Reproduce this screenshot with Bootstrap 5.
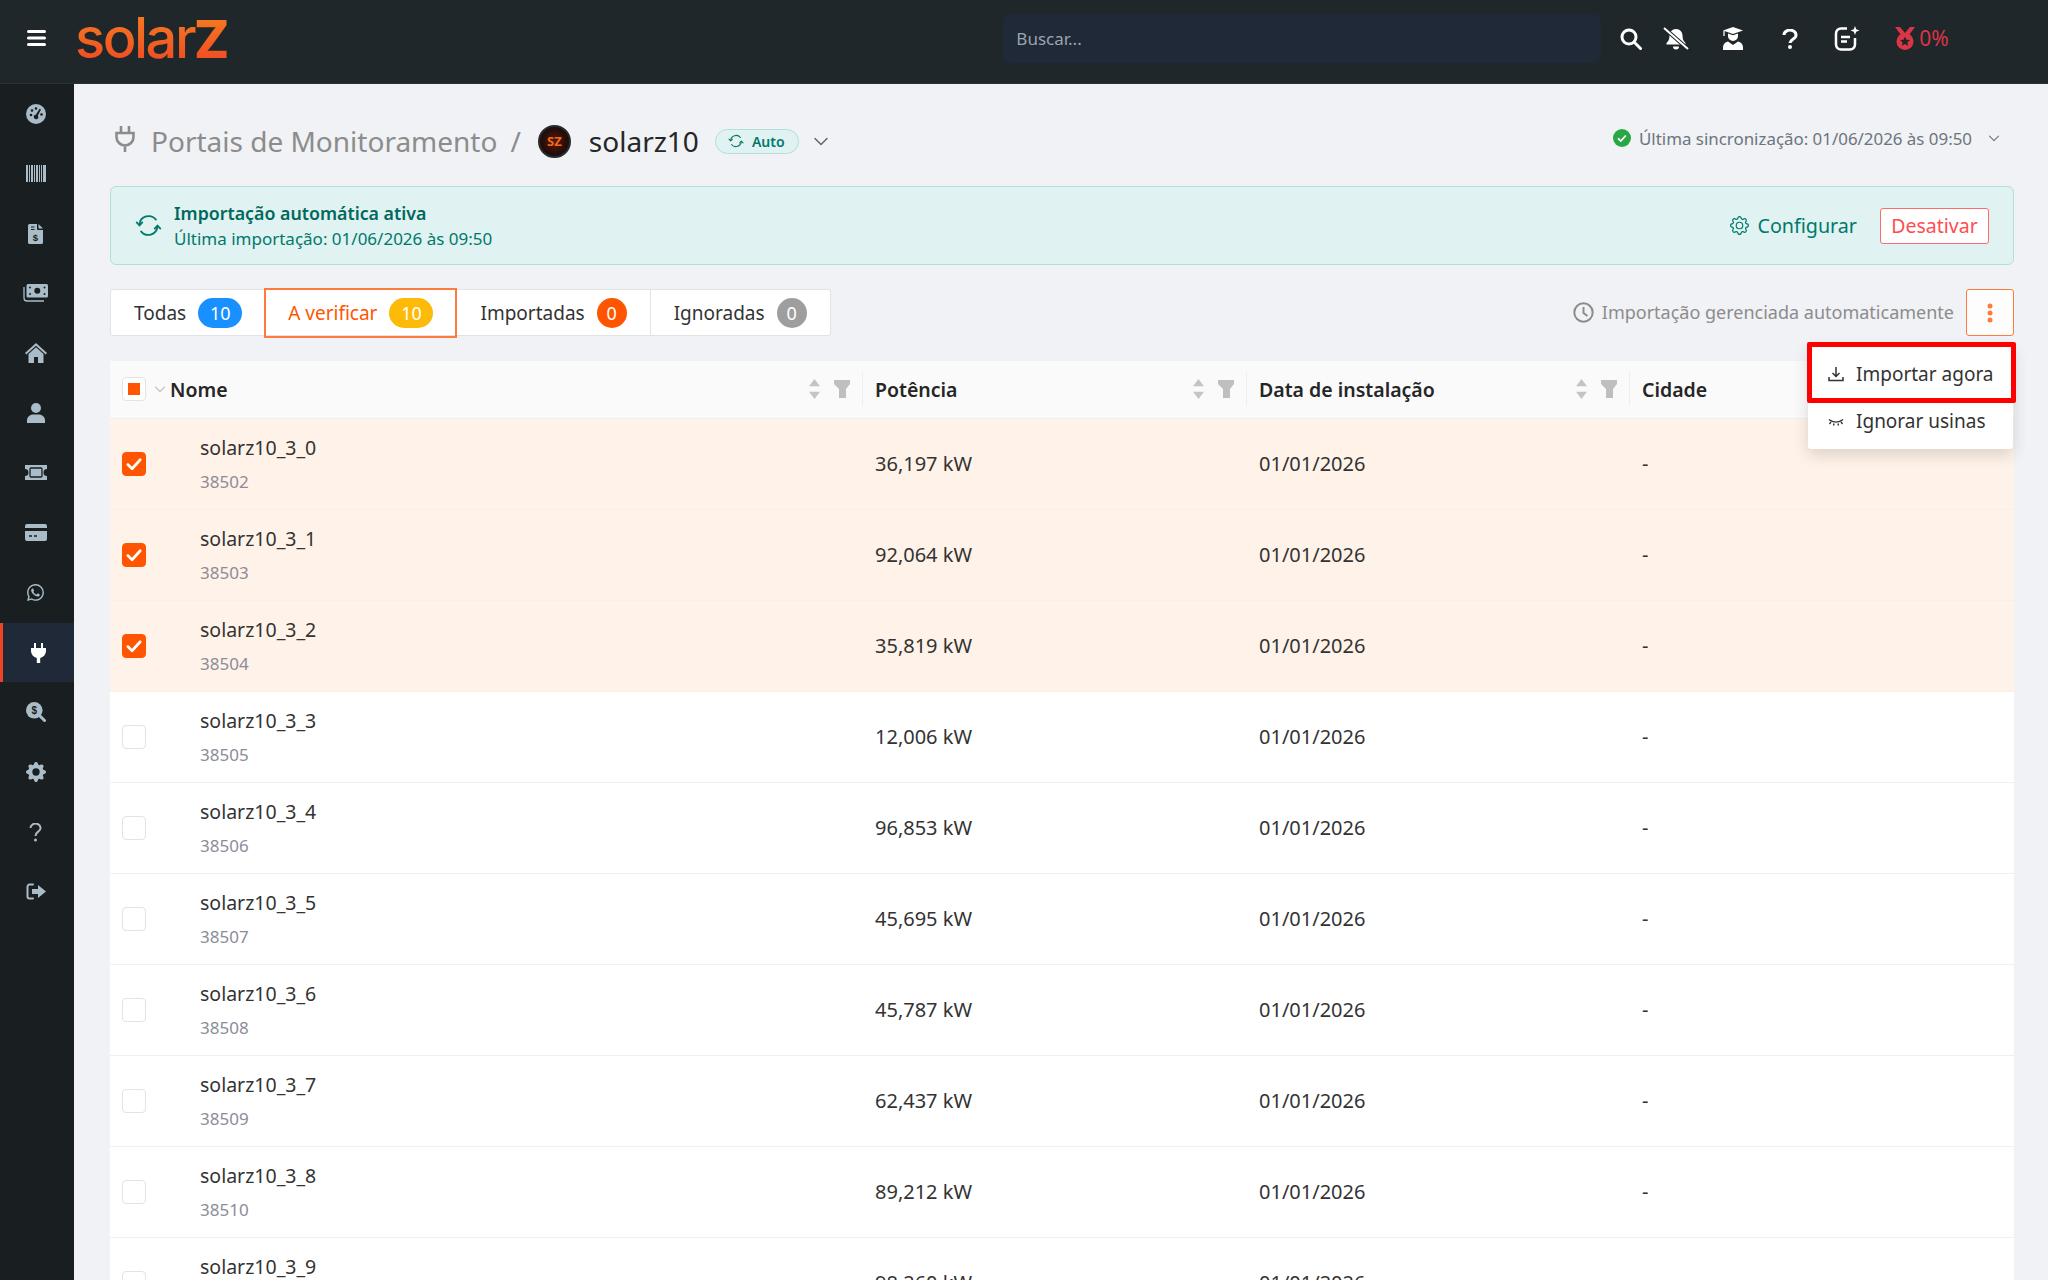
<!DOCTYPE html>
<html lang="pt-BR">
<head>
<meta charset="utf-8">
<meta name="viewport" content="width=device-width, initial-scale=1">
<title>Portais de Monitoramento - solarZ</title>
<link href="https://cdn.jsdelivr.net/npm/bootstrap@5.3.2/dist/css/bootstrap.min.css" rel="stylesheet">
<style>
  html, body { height: 100%; overflow: hidden; }
  body { font-family: "Noto Sans", sans-serif; font-size: 20px; color: #262626; background: #f0f2f5; }
  svg { display: block; flex: none; }

  .top-bar { flex: none; height: 84px; background: #1f272b; border-bottom: 1px solid #2a3438; padding: 0; flex-wrap: nowrap; justify-content: flex-start; }
  .burger { width: 72px; display: flex; justify-content: center; margin-top: -8px; }
  .logo-txt { margin-left: 3px; font-family: Inter, sans-serif; font-size: 56px; font-weight: 500; line-height: 60px; letter-spacing: -2.5px;
    background: linear-gradient(180deg, #f58220, #ef4423); -webkit-background-clip: text; background-clip: text; color: transparent; margin-top: -6px; }
  .logo-z { font-weight: 800; font-size: 52px; letter-spacing: 0; }
  .search-box { margin-left: 774px; width: 598px; height: 49px; background: #1f2937; border: 0; border-radius: 8px; color: #fff; font-size: 17px; padding: 0 13px; margin-top: -6px; }
  .search-box::placeholder { color: #9ca3af; opacity: 1; }
  .tb-ico { width: 24px; display: flex; justify-content: center; margin-left: 33px; margin-top: -6px; }
  .medal-pct { color: #dc3545; font-size: 21px; margin-left: 3px; margin-top: 0; }

  .side-bar { width: 74px; background: #191e20; flex: none; }
  .side-item { height: 59.85px; display: flex; align-items: center; justify-content: center; color: #a9bcc8; padding-right: 3px; }
  .side-item.active-item { background: #1f2937; border-left: 3px solid #ef4423; color: #fff; padding-right: 0; }

  .main-area { padding: 0 34px 0 36px; min-width: 0; }
  .head-row { height: 102px; padding-top: 12px; }
  .crumb-muted { font-size: 28px; color: #8c8c8c; }
  .crumb-name { font-size: 28px; color: #262626; margin-left: 18px; }
  .crumb-slash { font-size: 28px; color: #8c8c8c; margin: 0 17px 0 13px; }
  .avatar-sz { width: 33px; height: 33px; border-radius: 50%; background: radial-gradient(circle, #5a1a0a 0, #2a0d08 55%, #111 75%); border: 2px solid #2b2b2b;
    color: #f26a1b; font-size: 13px; font-weight: 700; display: flex; align-items: center; justify-content: center; line-height: 1; }
  .auto-pill { margin-left: 16px; height: 25px; padding: 0 13px 0 12px; background: #e0f2f1; border: 1px solid #b2dfdb; border-radius: 13px; color: #00796b; font-size: 14px; font-weight: 600; }
  .pill-chev { margin-left: 14px; color: #666; }
  .sync-wrap { margin-right: 14px; margin-top: -5px; }
  .sync-txt { font-size: 16.9px; color: #6c757d; }

  .auto-alert { height: 79px; background: #e0f2f1; border: 1px solid #b2dfdb; border-radius: 6px; padding: 0 24px; margin-bottom: 24px; color: #00796b; }
  .auto-title { font-size: 17.8px; font-weight: 600; color: #00695c; line-height: 26px; }
  .auto-sub { font-size: 17px; line-height: 26px; }
  .cfg-link { color: #00796b; font-size: 19.7px; text-decoration: none; }
  .off-btn { height: 36px; width: 109px; padding: 0; background: #fff; border: 1px solid #ff6b6b; border-radius: 3px; color: #ff4d4f; font-size: 19.5px; line-height: 1; margin-left: 23px; }

  .tool-row { height: 47px; margin-bottom: 25px; }
  .tab-grp { height: 47px; background: #fff; border: 1px solid #e3e3e3; border-radius: 3px; font-size: 19px; }
  .tab-one { display: flex; align-items: center; height: 100%; padding: 1px 23px 0; gap: 12px; color: #333; border-left: 1px solid #e3e3e3; }
  .tab-one:first-child { border-left: 0; }
  .tab-one.tab-on { color: #ff5500; outline: 2px solid #ff7a3d; outline-offset: -1px; border-left: 0; height: 48px; z-index: 1; }
  .cnt { min-width: 30px; height: 30px; border-radius: 15px; color: #fff; font-size: 18px; display: flex; align-items: center; justify-content: center; padding: 0 8px; }
  .cnt-10 { width: 44px; }
  .cnt-blue { background: #1890ff; }
  .cnt-amber { background: #fdba08; }
  .cnt-orange { background: #ff5500; }
  .cnt-grey { background: #9e9e9e; }
  .managed-txt { color: #8c8c8c; font-size: 18px; }
  .kebab-btn { width: 48px; height: 47px; padding: 0; background: #fdfdfd; border: 1px solid #ff7a3d; border-radius: 3px; margin-left: 12px; display: flex; align-items: center; justify-content: center; }
  .kebab-wrap { position: relative; }
  .kebab-menu { right: 1px; top: 56px; width: 205px; min-width: 0; padding: 0; border: 0; border-radius: 3px; box-shadow: 0 6px 16px rgba(0,0,0,.14); font-size: 19px; z-index: 5; }
  .kebab-menu .dropdown-item { display: flex; align-items: center; color: #333; height: 46px; padding: 0 0 9px 20px; gap: 12px; }
  .kebab-menu li:first-child .dropdown-item { height: 58px; padding: 0 0 0 20px; }
  .mark-box { position: absolute; left: -1px; top: -3px; width: 209px; height: 61px; border: 5px solid #f00; border-radius: 2px; pointer-events: none; }

  .usinas-tbl { table-layout: fixed; width: 1904px; margin: 0; color: #333; font-size: 20px; }
  .usinas-tbl thead th { background: #fafafa; height: 57px; padding: 0; border-bottom: 1px solid #f0f0f0; font-weight: 600; vertical-align: middle; color: #262626; font-size: 19.5px; }
  .usinas-tbl tbody td { height: 91px; padding: 0; border-bottom: 1px solid #f0f0f0; vertical-align: middle; background: #fff; color: #333; }
  .usinas-tbl tbody tr.row-sel td { background: #fff2e8; border-bottom-color: #fbeee4; }
  .th-in { height: 34px; display: flex; align-items: center; padding: 0 12px; border-right: 1px solid #eee; }
  .th-ico { gap: 14px; margin-left: auto; }
  .td-val { padding-left: 12px !important; }
  .td-name { padding-left: 30px !important; }
  .nm { line-height: 30px; font-size: 19.5px; }
  .nm-id { line-height: 24px; margin-top: 7px; font-size: 17px; color: #8c8c99; }
  .cb { width: 24px; height: 24px; border: 1px solid #e3e3e3; border-radius: 4px; background: #fff; display: flex; align-items: center; justify-content: center; margin-left: 12px; }
  .cb-on { background: #ff5500; border-color: #ff5500; }
  .cb-mid::after { content: ""; width: 12px; height: 12px; background: #ff5500; }
</style>
</head>
<body>
<svg width="0" height="0" class="position-absolute">
  <defs>
    <symbol id="i-sort" viewBox="0 0 12 22"><path d="M6 0l6 8H0zM6 22l-6-8h12z" fill="#c4c4c4"/></symbol>
    <symbol id="i-filter" viewBox="0 0 16 18"><path d="M0 0h16v4l-4 5v9H5V9L0 4z" fill="#bfbfbf"/></symbol>
    <symbol id="i-check" viewBox="0 0 16 16"><path d="M2.5 8.5l3.8 3.7 7.2-8" fill="none" stroke="#fff" stroke-width="2.4" stroke-linecap="round" stroke-linejoin="round"/></symbol>
    <symbol id="i-sync" viewBox="0 0 24 24"><g fill="none" stroke="currentColor" stroke-width="1.6" stroke-linecap="round" stroke-linejoin="round"><path d="M4 11a8.2 8.2 0 0 1 14.6-4.2"/><path d="M20 13a8.2 8.2 0 0 1-14.6 4.2"/><path d="M1.5 9.2L4 12l2.5-2.8M17.5 14.8L20 12l2.5 2.8"/></g></symbol>
    <symbol id="i-chev" viewBox="0 0 16 16"><path d="M2 5.5l6 6 6-6" fill="none" stroke="currentColor" stroke-width="1.5" stroke-linecap="round" stroke-linejoin="round"/></symbol>
  </defs>
</svg>

<div class="d-flex flex-column vh-100">
  <nav class="navbar top-bar">
    <div class="burger"><svg width="19" height="16" viewBox="0 0 19 16"><path d="M1.5 1.5h16M1.5 8h16M1.5 14.5h16" stroke="#fff" stroke-width="3" stroke-linecap="round"/></svg></div>
    <div class="logo-txt">solar<span class="logo-z">Z</span></div>
    <input class="search-box" type="text" placeholder="Buscar...">
    <div class="tb-ico" style="margin-left:18px"><svg width="24" height="22" viewBox="0 0 24 22"><circle cx="10" cy="9" r="7" fill="none" stroke="#fff" stroke-width="3"/><path d="M15.5 14.5l6 6" stroke="#fff" stroke-width="3" stroke-linecap="round"/></svg></div>
    <div class="tb-ico" style="margin-left:21px"><svg width="28" height="23" viewBox="0 0 28 23"><path d="M14 2c-4 0-6.5 3-6.5 6.5 0 4-1 5.500-3 7.500v1.500h19V16c-2-2-3-3.500-3-7.500C20.500 5 18 2 14 2z" fill="#fff"/><path d="M11 19.500h6a3 3 0 0 1-6 0z" fill="#fff"/><path d="M2 1l24 21" stroke="#1f272b" stroke-width="4"/><path d="M2 1l24 21" stroke="#fff" stroke-width="2"/></svg></div>
    <div class="tb-ico"><svg width="22" height="23" viewBox="0 0 22 23"><path d="M11 0l10 3.500-10 3.500L1 3.500z" fill="#fff"/><path d="M6 6.500v2.500a5 5 0 0 0 10 0V6.500l-5 1.800z" fill="#fff"/><path d="M6 14.500l5 3.500 5-3.500c3 .5 5 3 5 5.500v3H1v-3c0-2.500 2-5 5-5.500z" fill="#fff"/><path d="M2 4v5" stroke="#fff" stroke-width="1.300"/></svg></div>
    <div class="tb-ico"><svg width="16" height="20" viewBox="0 0 16 20"><path d="M2 6a6 4.800 0 1 1 9.500 3.800C9 11.500 8 12 8 14" fill="none" stroke="#fff" stroke-width="3"/><circle cx="8" cy="18" r="2" fill="#fff"/></svg></div>
    <div class="tb-ico"><svg width="26" height="26" viewBox="0 0 26 26"><path d="M13 2.500H7a5 5 0 0 0-5 5v11a5 5 0 0 0 5 5h9a5 5 0 0 0 5-5V12" fill="none" stroke="#fff" stroke-width="2.500"/><path d="M7 11h9M7 15.500h6" stroke="#fff" stroke-width="2.500"/><path d="M21 0l1.200 3.300L25.500 4.500l-3.300 1.200L21 9l-1.200-3.300L16.500 4.500l3.300-1.200z" fill="#fff"/></svg></div>
    <div class="tb-ico d-flex align-items-center" style="width:auto;margin-left:35px">
      <svg width="22" height="23" viewBox="0 0 22 23"><path d="M1 0h5l5 6 5-6h5l-6 8H7z" fill="#dc3545"/><circle cx="11" cy="14.500" r="8.500" fill="#dc3545"/><path d="M11 9.500l1.500 3.200 3.500.4-2.600 2.300.8 3.400-3.200-1.800-3.200 1.800.8-3.400L6 13.100l3.500-.4z" fill="#1f272b"/></svg>
      <span class="medal-pct">0%</span>
    </div>
  </nav>

  <div class="d-flex flex-grow-1" style="min-height:0">
    <aside class="side-bar">
      <div class="side-item"><svg width="20" height="20" viewBox="0 0 20 20"><circle cx="10" cy="10" r="10" fill="currentColor"/><g fill="#191e20"><circle cx="5" cy="11" r="1.300"/><circle cx="6" cy="6.500" r="1.300"/><circle cx="10" cy="4.500" r="1.300"/><circle cx="15.500" cy="10.500" r="1.300"/><path d="M13.600 4.800l1.400.7-3.200 6.200a2.200 2.200 0 1 1-2-.9z"/></g></svg></div>
      <div class="side-item"><svg width="20" height="17" viewBox="0 0 20 17" fill="currentColor"><path d="M0 0h2v17H0zM3 0h1v17H3zM5 0h2v17H5zM8 0h1v17H8zM10 0h2v17h-2zM13 0h1v17h-1zM15 0h1v17h-1zM17 0h3v17h-3z"/></svg></div>
      <div class="side-item"><svg width="15" height="20" viewBox="0 0 15 20"><path d="M1.500 0H9v5a1 1 0 0 0 1 1h5v12.500a1.500 1.500 0 0 1-1.500 1.500h-12A1.500 1.500 0 0 1 0 18.500v-17A1.500 1.500 0 0 1 1.500 0zM10.500 0L15 4.500h-4.500z" fill="currentColor"/><path d="M3 3h3.500M3 5.500h3.500" stroke="#191e20" stroke-width="1.200"/><text x="7.500" y="16.500" text-anchor="middle" font-family="Liberation Sans" font-size="9.500" font-weight="700" fill="#191e20">$</text></svg></div>
      <div class="side-item"><svg width="25" height="18" viewBox="0 0 25 18"><path d="M1 3v11a3 3 0 0 0 3 3h17" fill="none" stroke="currentColor" stroke-width="1.300"/><rect x="3.500" y="0" width="21.500" height="13.500" rx="1.500" fill="currentColor"/><circle cx="14.300" cy="6.800" r="3" fill="#191e20"/><circle cx="7" cy="3.500" r="1" fill="#191e20"/><circle cx="21.500" cy="3.500" r="1" fill="#191e20"/><circle cx="7" cy="10" r="1" fill="#191e20"/><circle cx="21.500" cy="10" r="1" fill="#191e20"/></svg></div>
      <div class="side-item"><svg width="22" height="20" viewBox="0 0 22 20" fill="currentColor"><path d="M11 0l11 10-1.300 1.400L11 2.700 1.300 11.400 0 10z"/><path d="M3.500 11L11 4.200 18.500 11v9h-5.500v-6H9v6H3.500z"/></svg></div>
      <div class="side-item"><svg width="18" height="20" viewBox="0 0 18 20" fill="currentColor"><circle cx="9" cy="5" r="5"/><path d="M0 20v-2.500C0 14 3 11.500 6 11.500h6c3 0 6 2.500 6 6V20z"/></svg></div>
      <div class="side-item"><svg width="22" height="15" viewBox="0 0 22 15"><path d="M0 0h22v4a3.500 3.500 0 0 0 0 7v4H0v-4a3.500 3.500 0 0 0 0-7z" fill="currentColor"/><rect x="5" y="3" width="12" height="9" rx="1" fill="none" stroke="#191e20" stroke-width="1.300"/></svg></div>
      <div class="side-item"><svg width="22" height="17" viewBox="0 0 22 17"><path d="M2 0h18a2 2 0 0 1 2 2v2H0V2a2 2 0 0 1 2-2zM0 7h22v8a2 2 0 0 1-2 2H2a2 2 0 0 1-2-2z" fill="currentColor"/><path d="M4 12h3M9 12h3" stroke="#191e20" stroke-width="1.300"/></svg></div>
      <div class="side-item"><svg width="17" height="17" viewBox="0 0 16 16" fill="currentColor"><path d="M13.601 2.326A7.854 7.854 0 0 0 7.994 0C3.627 0 .068 3.558.064 7.926c0 1.399.366 2.76 1.057 3.965L0 16l4.204-1.102a7.933 7.933 0 0 0 3.79.965h.004c4.368 0 7.926-3.558 7.93-7.93A7.898 7.898 0 0 0 13.6 2.326zM7.994 14.521a6.573 6.573 0 0 1-3.356-.92l-.24-.144-2.494.654.666-2.433-.156-.251a6.56 6.56 0 0 1-1.007-3.505c0-3.626 2.957-6.584 6.591-6.584a6.56 6.56 0 0 1 4.66 1.931 6.557 6.557 0 0 1 1.928 4.66c-.004 3.639-2.961 6.592-6.592 6.592zm3.615-4.934c-.197-.099-1.17-.578-1.353-.646-.182-.065-.315-.099-.445.099-.133.197-.513.646-.627.775-.114.133-.232.148-.43.05-.197-.1-.836-.308-1.592-.985-.59-.525-.985-1.175-1.103-1.372-.114-.198-.011-.304.088-.403.087-.088.197-.232.296-.346.1-.114.133-.198.198-.33.065-.134.034-.248-.015-.347-.05-.099-.445-1.076-.612-1.47-.16-.389-.323-.335-.445-.34-.114-.007-.247-.007-.38-.007a.729.729 0 0 0-.529.247c-.182.198-.691.677-.691 1.654 0 .977.71 1.916.81 2.049.098.133 1.394 2.132 3.383 2.992.47.205.84.326 1.129.418.475.152.904.129 1.246.08.38-.058 1.171-.48 1.338-.943.164-.464.164-.86.114-.943-.049-.084-.182-.133-.38-.232z"/></svg></div>
      <div class="side-item active-item"><svg width="15" height="20" viewBox="0 0 15 20"><path d="M3 0h2v5H3zM10 0h2v5h-2z" fill="#fff"/><path d="M0 5h15v3a7 7 0 0 1-5.800 6.900V20H5.800v-5.100A7 7 0 0 1 0 8z" fill="#fff"/></svg></div>
      <div class="side-item"><svg width="20" height="20" viewBox="0 0 20 20"><circle cx="8.300" cy="8.300" r="8.300" fill="currentColor"/><path d="M13.500 13.500l5 5" stroke="currentColor" stroke-width="3" stroke-linecap="round"/><text x="8.300" y="12" text-anchor="middle" font-family="Liberation Sans" font-size="10" font-weight="700" fill="#191e20">$</text></svg></div>
      <div class="side-item"><svg width="20" height="20" viewBox="0 0 16 16" fill="currentColor"><path d="M9.405 1.05c-.413-1.4-2.397-1.4-2.81 0l-.1.34a1.464 1.464 0 0 1-2.105.872l-.31-.17c-1.283-.698-2.686.705-1.987 1.987l.169.311c.446.82.023 1.841-.872 2.105l-.34.1c-1.4.413-1.4 2.397 0 2.81l.34.1a1.464 1.464 0 0 1 .872 2.105l-.17.31c-.698 1.283.705 2.686 1.987 1.987l.311-.169a1.464 1.464 0 0 1 2.105.872l.1.34c.413 1.4 2.397 1.4 2.81 0l.1-.34a1.464 1.464 0 0 1 2.105-.872l.31.17c1.283.698 2.686-.705 1.987-1.987l-.169-.311a1.464 1.464 0 0 1 .872-2.105l.34-.1c1.4-.413 1.4-2.397 0-2.81l-.34-.1a1.464 1.464 0 0 1-.872-2.105l.17-.31c.698-1.283-.705-2.686-1.987-1.987l-.311.169a1.464 1.464 0 0 1-2.105-.872l-.1-.34zM8 10.930a2.929 2.929 0 1 1 0-5.860 2.929 2.929 0 0 1 0 5.858z"/></svg></div>
      <div class="side-item"><svg width="13" height="19" viewBox="0 0 13 19"><path d="M1.500 5a5 4.300 0 1 1 8 3.300C7.500 9.800 6.500 10.500 6.500 13" fill="none" stroke="currentColor" stroke-width="2"/><circle cx="6.500" cy="17" r="1.500" fill="currentColor"/></svg></div>
      <div class="side-item"><svg width="20" height="17" viewBox="0 0 20 17"><path d="M7 1.500H3.500a2 2 0 0 0-2 2v10a2 2 0 0 0 2 2H7" fill="none" stroke="currentColor" stroke-width="2" stroke-linecap="round"/><path d="M12 2l8 6.500-8 6.500v-4H6V6h6z" fill="currentColor"/></svg></div>
    </aside>

    <main class="main-area flex-grow-1">
      <div class="head-row d-flex align-items-center">
        <svg class="me-3" width="20" height="28" viewBox="0 0 20 28" fill="none" stroke="#8c8c8c" stroke-width="2.600" style="margin-left:5px;margin-top:-4px"><path d="M6 1v7M14 1v7M1.500 8h17v4a8.500 8.500 0 0 1-17 0zM10 20.500V27"/></svg>
        <span class="crumb-muted">Portais de Monitoramento</span>
        <span class="crumb-slash">/</span>
        <span class="avatar-sz">SZ</span>
        <span class="crumb-name">solarz10</span>
        <span class="auto-pill d-inline-flex align-items-center gap-2"><svg width="16" height="16"><use href="#i-sync"/></svg>Auto</span>
        <svg class="pill-chev" width="16" height="16"><use href="#i-chev"/></svg>
        <div class="ms-auto d-flex align-items-center sync-wrap">
          <svg width="18" height="18" viewBox="0 0 18 18"><circle cx="9" cy="9" r="9" fill="#28a745"/><path d="M5 9.300l2.800 2.700 5-5.500" fill="none" stroke="#fff" stroke-width="1.800"/></svg>
          <span class="sync-txt ms-2 me-3">Última sincronização: 01/06/2026 às 09:50</span>
          <svg width="12" height="12" style="color:#6c757d"><use href="#i-chev"/></svg>
        </div>
      </div>

      <div class="auto-alert d-flex align-items-center">
        <svg width="27" height="27" style="margin-right:12px"><use href="#i-sync"/></svg>
        <div>
          <div class="auto-title">Importação automática ativa</div>
          <div class="auto-sub">Última importação: 01/06/2026 às 09:50</div>
        </div>
        <a class="cfg-link d-flex align-items-center gap-2 ms-auto" href="#"><svg width="19" height="19" viewBox="0 0 16 16" fill="currentColor"><path d="M8 4.754a3.246 3.246 0 1 0 0 6.492 3.246 3.246 0 0 0 0-6.492zM5.754 8a2.246 2.246 0 1 1 4.492 0 2.246 2.246 0 0 1-4.492 0z"/><path d="M9.796 1.343c-.527-1.79-3.065-1.79-3.592 0l-.094.319a.873.873 0 0 1-1.255.52l-.292-.16c-1.64-.892-3.433.902-2.54 2.541l.159.292a.873.873 0 0 1-.52 1.255l-.319.094c-1.79.527-1.79 3.065 0 3.592l.319.094a.873.873 0 0 1 .52 1.255l-.16.292c-.892 1.64.901 3.434 2.541 2.54l.292-.159a.873.873 0 0 1 1.255.52l.094.319c.527 1.79 3.065 1.79 3.592 0l.094-.319a.873.873 0 0 1 1.255-.52l.292.16c1.64.893 3.434-.902 2.54-2.541l-.159-.292a.873.873 0 0 1 .52-1.255l.319-.094c1.79-.527 1.79-3.065 0-3.592l-.319-.094a.873.873 0 0 1-.52-1.255l.16-.292c.893-1.64-.902-3.433-2.541-2.54l-.292.159a.873.873 0 0 1-1.255-.52l-.094-.319zm-2.633.283c.246-.835 1.428-.835 1.674 0l.094.319a1.873 1.873 0 0 0 2.693 1.115l.291-.16c.764-.415 1.6.42 1.184 1.185l-.159.292a1.873 1.873 0 0 0 1.116 2.692l.318.094c.835.246.835 1.428 0 1.674l-.319.094a1.873 1.873 0 0 0-1.115 2.693l.16.291c.415.764-.42 1.6-1.185 1.184l-.291-.159a1.873 1.873 0 0 0-2.693 1.116l-.094.318c-.246.835-1.428.835-1.674 0l-.094-.319a1.873 1.873 0 0 0-2.692-1.115l-.292.16c-.764.415-1.6-.42-1.184-1.185l.159-.291A1.873 1.873 0 0 0 1.945 8.93l-.319-.094c-.835-.246-.835-1.428 0-1.674l.319-.094A1.873 1.873 0 0 0 3.06 4.377l-.16-.292c-.415-.764.42-1.6 1.185-1.184l.292.159a1.873 1.873 0 0 0 2.692-1.115l.094-.319z"/></svg>Configurar</a>
        <button class="off-btn" type="button">Desativar</button>
      </div>

      <div class="tool-row d-flex align-items-center">
        <div class="tab-grp d-flex align-items-center">
          <div class="tab-one">Todas <span class="cnt cnt-10 cnt-blue">10</span></div>
          <div class="tab-one tab-on position-relative">A verificar <span class="cnt cnt-10 cnt-amber">10</span></div>
          <div class="tab-one">Importadas <span class="cnt cnt-orange">0</span></div>
          <div class="tab-one">Ignoradas <span class="cnt cnt-grey">0</span></div>
        </div>
        <div class="ms-auto d-flex align-items-center gap-2 managed-txt">
          <svg width="21" height="21" viewBox="0 0 21 21" fill="none" stroke="#8c8c8c" stroke-width="2"><circle cx="10.500" cy="10.500" r="9.200"/><path d="M10.500 5v6l4 3"/></svg>
          Importação gerenciada automaticamente
        </div>
        <div class="kebab-wrap">
          <button class="kebab-btn" type="button"><svg width="6" height="20" viewBox="0 0 6 20" fill="#ff7a3d"><circle cx="3" cy="3" r="2.500"/><circle cx="3" cy="10" r="2.500"/><circle cx="3" cy="17" r="2.500"/></svg></button>
          <ul class="dropdown-menu show kebab-menu">
            <li><a class="dropdown-item" href="#"><svg width="16" height="16" viewBox="0 0 16 16" fill="none" stroke="#333" stroke-width="1.500"><path d="M8 1v9M4.500 7L8 10.500 11.500 7M1 11v3.500h14V11"/></svg>Importar agora</a></li>
            <li><a class="dropdown-item" href="#"><svg width="16" height="16" viewBox="0 0 16 16" fill="none" stroke="#333" stroke-width="1.400"><path d="M1 5.500c4 3.500 10 3.500 14 0M3 8L1.500 10M6 9.500L5.500 11.500M10 9.500l.5 2M13 8l1.500 2"/></svg>Ignorar usinas</a></li>
            <li class="mark-box"></li>
          </ul>
        </div>
      </div>

      <table class="table usinas-tbl">
        <colgroup><col style="width:60px"><col style="width:693px"><col style="width:384px"><col style="width:383px"><col style="width:384px"></colgroup>
        <thead>
          <tr>
            <th><div class="d-flex align-items-center"><span class="cb cb-mid"></span><svg class="ms-2" width="12" height="12" style="color:#bbb"><use href="#i-chev"/></svg></div></th>
            <th><div class="th-in" style="padding-left:0">Nome<div class="th-ico d-flex align-items-center"><svg width="11" height="20"><use href="#i-sort"/></svg><svg width="16" height="18"><use href="#i-filter"/></svg></div></div></th>
            <th><div class="th-in">Potência<div class="th-ico d-flex align-items-center"><svg width="11" height="20"><use href="#i-sort"/></svg><svg width="16" height="18"><use href="#i-filter"/></svg></div></div></th>
            <th><div class="th-in">Data de instalação<div class="th-ico d-flex align-items-center"><svg width="11" height="20"><use href="#i-sort"/></svg><svg width="16" height="18"><use href="#i-filter"/></svg></div></div></th>
            <th><div class="th-in" style="border:0">Cidade</div></th>
          </tr>
        </thead>
        <tbody>
          <tr class="row-sel"><td><span class="cb cb-on"><svg width="18" height="18"><use href="#i-check"/></svg></span></td><td class="td-name"><div class="nm">solarz10_3_0</div><div class="nm-id">38502</div></td><td class="td-val">36,197 kW</td><td class="td-val">01/01/2026</td><td class="td-val">-</td></tr>
          <tr class="row-sel"><td><span class="cb cb-on"><svg width="18" height="18"><use href="#i-check"/></svg></span></td><td class="td-name"><div class="nm">solarz10_3_1</div><div class="nm-id">38503</div></td><td class="td-val">92,064 kW</td><td class="td-val">01/01/2026</td><td class="td-val">-</td></tr>
          <tr class="row-sel"><td><span class="cb cb-on"><svg width="18" height="18"><use href="#i-check"/></svg></span></td><td class="td-name"><div class="nm">solarz10_3_2</div><div class="nm-id">38504</div></td><td class="td-val">35,819 kW</td><td class="td-val">01/01/2026</td><td class="td-val">-</td></tr>
          <tr><td><span class="cb"></span></td><td class="td-name"><div class="nm">solarz10_3_3</div><div class="nm-id">38505</div></td><td class="td-val">12,006 kW</td><td class="td-val">01/01/2026</td><td class="td-val">-</td></tr>
          <tr><td><span class="cb"></span></td><td class="td-name"><div class="nm">solarz10_3_4</div><div class="nm-id">38506</div></td><td class="td-val">96,853 kW</td><td class="td-val">01/01/2026</td><td class="td-val">-</td></tr>
          <tr><td><span class="cb"></span></td><td class="td-name"><div class="nm">solarz10_3_5</div><div class="nm-id">38507</div></td><td class="td-val">45,695 kW</td><td class="td-val">01/01/2026</td><td class="td-val">-</td></tr>
          <tr><td><span class="cb"></span></td><td class="td-name"><div class="nm">solarz10_3_6</div><div class="nm-id">38508</div></td><td class="td-val">45,787 kW</td><td class="td-val">01/01/2026</td><td class="td-val">-</td></tr>
          <tr><td><span class="cb"></span></td><td class="td-name"><div class="nm">solarz10_3_7</div><div class="nm-id">38509</div></td><td class="td-val">62,437 kW</td><td class="td-val">01/01/2026</td><td class="td-val">-</td></tr>
          <tr><td><span class="cb"></span></td><td class="td-name"><div class="nm">solarz10_3_8</div><div class="nm-id">38510</div></td><td class="td-val">89,212 kW</td><td class="td-val">01/01/2026</td><td class="td-val">-</td></tr>
          <tr><td><span class="cb"></span></td><td class="td-name"><div class="nm">solarz10_3_9</div><div class="nm-id">38511</div></td><td class="td-val">98,260 kW</td><td class="td-val">01/01/2026</td><td class="td-val">-</td></tr>
        </tbody>
      </table>
    </main>
  </div>
</div>
<script src="https://cdn.jsdelivr.net/npm/bootstrap@5.3.2/dist/js/bootstrap.bundle.min.js"></script>
</body>
</html>
